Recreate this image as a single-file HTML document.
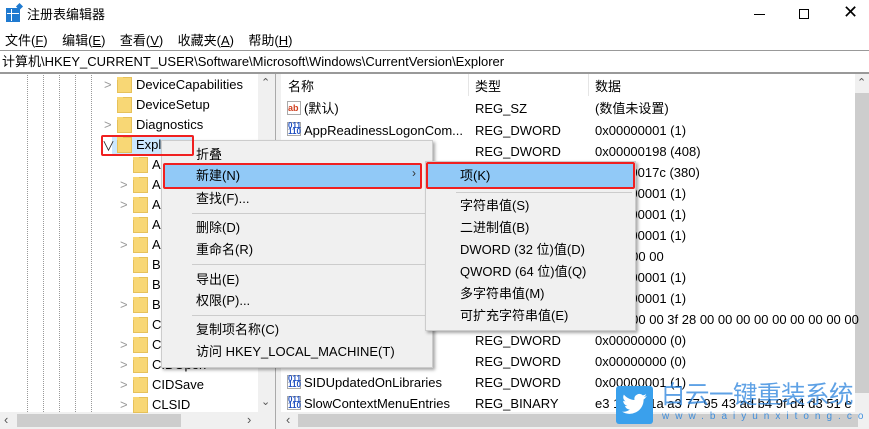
<!DOCTYPE html><html><head><meta charset="utf-8"><style>
*{margin:0;padding:0;box-sizing:border-box}
body{width:869px;height:429px;overflow:hidden;background:#fff;font-family:"Liberation Sans","Noto Sans CJK SC",sans-serif;font-size:13px;color:#000;position:relative}
.a{position:absolute;white-space:nowrap}
.t{line-height:22px}
.fold{position:absolute;width:15px;height:16px;background:#f8d775;border:1px solid #e6c15a}
.fold:before{content:"";position:absolute;left:-1px;top:-1px;width:6px;height:3px;background:#f8d775}
.chev{position:absolute;color:#999;font-size:13px}
.dv{position:absolute;top:73px;height:339px;border-left:1px dotted #999}
.sep{position:absolute;height:1px;background:#ccc}
</style></head><body>
<div class="a" style="left:6px;top:8px;width:14px;height:14px;background:#1f7ad0;border:1px solid #1f7ad0;background-image:linear-gradient(#fff 0 0),linear-gradient(#fff 0 0);background-size:14px 1px,1px 14px;background-position:0 4px,4px 0;background-repeat:no-repeat"></div>
<div class="a" style="left:17px;top:4px;width:5px;height:5px;background:#1f7ad0;transform:rotate(45deg)"></div>
<div class="a t" style="left:27px;top:4px">注册表编辑器</div>
<div class="a" style="left:754px;top:14px;width:11px;height:1px;background:#000"></div>
<div class="a" style="left:799px;top:9px;width:10px;height:10px;border:1px solid #000"></div>
<div class="a" style="left:843px;top:2px;font-size:18px;font-weight:300">✕</div>
<div class="a t" style="left:5px;top:30px">文件(<u>F</u>)&nbsp;&nbsp;&nbsp; 编辑(<u>E</u>)&nbsp;&nbsp;&nbsp; 查看(<u>V</u>)&nbsp;&nbsp;&nbsp; 收藏夹(<u>A</u>)&nbsp;&nbsp;&nbsp; 帮助(<u>H</u>)</div>
<div class="a" style="left:0;top:50px;width:869px;height:1px;background:#999"></div>
<div class="a t" style="left:2px;top:51px">计算机\HKEY_CURRENT_USER\Software\Microsoft\Windows\CurrentVersion\Explorer</div>
<div class="a" style="left:0;top:72px;width:869px;height:2px;background:#999"></div>
<div class="dv" style="left:27px"></div><div class="dv" style="left:43px"></div><div class="dv" style="left:59px"></div><div class="dv" style="left:75px"></div><div class="dv" style="left:91px"></div>
<div class="a" style="left:258px;top:74px;width:17px;height:338px;background:#f0f0f0"></div>
<div class="a" style="left:261px;top:76px;font-size:11px;color:#555">⌃</div>
<div class="a" style="left:261px;top:395px;font-size:11px;color:#555">⌄</div>
<div class="a" style="left:0;top:412px;width:275px;height:17px;background:#f0f0f0"></div>
<div class="a" style="left:17px;top:414px;width:164px;height:13px;background:#cdcdcd"></div>
<div class="a" style="left:4px;top:412px;color:#555">‹</div><div class="a" style="left:247px;top:412px;color:#555">›</div>
<div class="a" style="left:275px;top:74px;width:6px;height:355px;background:#f0f0f0;border-left:1px solid #aaa"></div>
<div class="a" style="left:112px;top:135px;width:82px;height:20px;background:#cce8ff"></div>
<div class="chev" style="left:104px;top:77px">&gt;</div><div class="fold" style="left:117px;top:77px"></div><div class="a t" style="left:136px;top:74px">DeviceCapabilities</div>
<div class="fold" style="left:117px;top:97px"></div><div class="a t" style="left:136px;top:94px">DeviceSetup</div>
<div class="chev" style="left:104px;top:117px">&gt;</div><div class="fold" style="left:117px;top:117px"></div><div class="a t" style="left:136px;top:114px">Diagnostics</div>
<div class="chev" style="left:102px;top:136px;color:#333">∨</div><div class="fold" style="left:117px;top:137px"></div><div class="a t" style="left:136px;top:134px">Explorer</div>
<div class="fold" style="left:133px;top:157px"></div><div class="a t" style="left:152px;top:154px">A</div>
<div class="chev" style="left:120px;top:177px">&gt;</div><div class="fold" style="left:133px;top:177px"></div><div class="a t" style="left:152px;top:174px">A</div>
<div class="chev" style="left:120px;top:197px">&gt;</div><div class="fold" style="left:133px;top:197px"></div><div class="a t" style="left:152px;top:194px">A</div>
<div class="fold" style="left:133px;top:217px"></div><div class="a t" style="left:152px;top:214px">A</div>
<div class="chev" style="left:120px;top:237px">&gt;</div><div class="fold" style="left:133px;top:237px"></div><div class="a t" style="left:152px;top:234px">A</div>
<div class="fold" style="left:133px;top:257px"></div><div class="a t" style="left:152px;top:254px">B</div>
<div class="fold" style="left:133px;top:277px"></div><div class="a t" style="left:152px;top:274px">B</div>
<div class="chev" style="left:120px;top:297px">&gt;</div><div class="fold" style="left:133px;top:297px"></div><div class="a t" style="left:152px;top:294px">B</div>
<div class="fold" style="left:133px;top:317px"></div><div class="a t" style="left:152px;top:314px">C</div>
<div class="chev" style="left:120px;top:337px">&gt;</div><div class="fold" style="left:133px;top:337px"></div><div class="a t" style="left:152px;top:334px">C</div>
<div class="chev" style="left:120px;top:357px">&gt;</div><div class="fold" style="left:133px;top:357px"></div><div class="a t" style="left:152px;top:354px">CIDOpen</div>
<div class="chev" style="left:120px;top:377px">&gt;</div><div class="fold" style="left:133px;top:377px"></div><div class="a t" style="left:152px;top:374px">CIDSave</div>
<div class="chev" style="left:120px;top:397px">&gt;</div><div class="fold" style="left:133px;top:397px"></div><div class="a t" style="left:152px;top:394px">CLSID</div>
<div class="a" style="left:468px;top:74px;width:1px;height:22px;background:#e5e5e5"></div>
<div class="a" style="left:588px;top:74px;width:1px;height:22px;background:#e5e5e5"></div>
<div class="a t" style="left:288px;top:76px">名称</div><div class="a t" style="left:475px;top:76px">类型</div><div class="a t" style="left:595px;top:76px">数据</div>
<div class="a" style="left:855px;top:74px;width:14px;height:338px;background:#f0f0f0"></div>
<div class="a" style="left:855px;top:93px;width:14px;height:300px;background:#cdcdcd"></div>
<div class="a" style="left:857px;top:76px;font-size:11px;color:#555">⌃</div>
<div class="a" style="left:281px;top:412px;width:588px;height:17px;background:#f0f0f0"></div>
<div class="a" style="left:298px;top:414px;width:560px;height:13px;background:#cdcdcd"></div>
<div class="a" style="left:286px;top:412px;color:#555">‹</div>
<div class="a" style="left:287px;top:101px;width:14px;height:14px;border:1px solid #aaa;color:#d04020;font-size:9px;font-weight:bold;line-height:12px">ab</div>
<div class="a t" style="left:304px;top:98px">(默认)</div><div class="a t" style="left:475px;top:98px">REG_SZ</div><div class="a t" style="left:595px;top:98px">(数值未设置)</div>
<div class="a" style="left:287px;top:122px;width:14px;height:14px;border:1px solid #aaa;color:#2050c0;font-size:8px;font-weight:bold;line-height:6px">011<br>110</div>
<div class="a t" style="left:304px;top:120px">AppReadinessLogonCom...</div><div class="a t" style="left:475px;top:120px">REG_DWORD</div><div class="a t" style="left:595px;top:120px">0x00000001 (1)</div>
<div class="a t" style="left:304px;top:141px">ShellState Height</div><div class="a t" style="left:475px;top:141px">REG_DWORD</div><div class="a t" style="left:595px;top:141px">0x00000198 (408)</div>
<div class="a t" style="left:595px;top:162px">0x0000017c (380)</div>
<div class="a t" style="left:595px;top:183px">0x00000001 (1)</div>
<div class="a t" style="left:595px;top:204px">0x00000001 (1)</div>
<div class="a t" style="left:595px;top:225px">0x00000001 (1)</div>
<div class="a t" style="left:595px;top:246px">00 00 00 00</div>
<div class="a t" style="left:595px;top:267px">0x00000001 (1)</div>
<div class="a t" style="left:595px;top:288px">0x00000001 (1)</div>
<div class="a t" style="left:595px;top:309px">00 00 00 00 3f 28 00 00 00 00 00 00 00 00 00</div>
<div class="a t" style="left:475px;top:330px">REG_DWORD</div><div class="a t" style="left:595px;top:330px">0x00000000 (0)</div>
<div class="a t" style="left:475px;top:351px">REG_DWORD</div><div class="a t" style="left:595px;top:351px">0x00000000 (0)</div>
<div class="a" style="left:287px;top:375px;width:14px;height:14px;border:1px solid #aaa;color:#2050c0;font-size:8px;font-weight:bold;line-height:6px">011<br>110</div>
<div class="a t" style="left:304px;top:372px">SIDUpdatedOnLibraries</div><div class="a t" style="left:475px;top:372px">REG_DWORD</div><div class="a t" style="left:595px;top:372px">0x00000001 (1)</div>
<div class="a" style="left:287px;top:396px;width:14px;height:14px;border:1px solid #aaa;color:#2050c0;font-size:8px;font-weight:bold;line-height:6px">011<br>110</div>
<div class="a t" style="left:304px;top:393px">SlowContextMenuEntries</div><div class="a t" style="left:475px;top:393px">REG_BINARY</div><div class="a t" style="left:595px;top:393px">e3 1e 8e 1a a3 77 95 43 ad b4 9f d4 d3 51 e</div>
<div class="a" style="left:855px;top:393px;width:14px;height:19px;background:#f0f0f0"></div>
<div class="a" style="left:161px;top:140px;width:272px;height:228px;background:#f0f0f0;border:1px solid #ccc;box-shadow:2px 2px 3px rgba(0,0,0,.35)"></div>
<div class="a" style="left:163px;top:164px;width:258px;height:23px;background:#91c9f7"></div>
<div class="a t" style="left:196px;top:144px">折叠</div>
<div class="a t" style="left:196px;top:165px">新建(N)</div><div class="a" style="left:412px;top:166px;font-size:12px;color:#333">›</div>
<div class="a t" style="left:196px;top:188px">查找(F)...</div>
<div class="sep" style="left:192px;top:213px;width:238px"></div>
<div class="a t" style="left:196px;top:217px">删除(D)</div>
<div class="a t" style="left:196px;top:239px">重命名(R)</div>
<div class="sep" style="left:192px;top:264px;width:238px"></div>
<div class="a t" style="left:196px;top:269px">导出(E)</div>
<div class="a t" style="left:196px;top:290px">权限(P)...</div>
<div class="sep" style="left:192px;top:315px;width:238px"></div>
<div class="a t" style="left:196px;top:319px">复制项名称(C)</div>
<div class="a t" style="left:196px;top:341px">访问 HKEY_LOCAL_MACHINE(T)</div>
<div class="a" style="left:425px;top:161px;width:211px;height:170px;background:#f0f0f0;border:1px solid #ccc;box-shadow:2px 2px 3px rgba(0,0,0,.35)"></div>
<div class="a" style="left:427px;top:164px;width:206px;height:23px;background:#91c9f7"></div>
<div class="sep" style="left:456px;top:192px;width:176px"></div>
<div class="a t" style="left:460px;top:165px">项(K)</div>
<div class="a t" style="left:460px;top:195px">字符串值(S)</div>
<div class="a t" style="left:460px;top:217px">二进制值(B)</div>
<div class="a t" style="left:460px;top:239px">DWORD (32 位)值(D)</div>
<div class="a t" style="left:460px;top:261px">QWORD (64 位)值(Q)</div>
<div class="a t" style="left:460px;top:283px">多字符串值(M)</div>
<div class="a t" style="left:460px;top:305px">可扩充字符串值(E)</div>
<div class="a" style="left:101px;top:135px;width:93px;height:21px;border:2px solid #f02020;border-radius:2px"></div>
<div class="a" style="left:163px;top:163px;width:259px;height:26px;border:2px solid #f02020;border-radius:2px"></div>
<div class="a" style="left:426px;top:162px;width:209px;height:27px;border:2px solid #f02020;border-radius:2px"></div>
<div class="a" style="left:616px;top:386px;width:37px;height:38px;background:#3aa0ec;border-radius:3px"></div>
<svg class="a" style="left:620px;top:392px" width="30" height="26" viewBox="0 0 30 26"><path d="M27 4c-1 .5-2 .7-3 .8 1-.6 1.8-1.6 2.2-2.7-1 .6-2 1-3.300 1.3A5 5 0 0 0 14.5 8c-4.3-.2-8-2.3-10.6-5.4-1.4 2.4-.6 5.3 1.6 6.8-.8 0-1.600-.3-2.300-.6 0 2.5 1.8 4.6 4.1 5.1-.8.2-1.5.2-2.300.1.6 2 2.5 3.5 4.8 3.5A10 10 0 0 1 2 19.6 14 14 0 0 0 23.6 7.5c1-.7 1.8-1.6 2.5-2.5z" fill="#fff"/></svg>
<div class="a" style="left:661px;top:381px;font-size:24.5px;line-height:30px;color:rgba(40,130,220,.75);letter-spacing:-0.5px">白云一键重装系统</div>
<div class="a" style="left:662px;top:411px;font-size:10px;line-height:12px;color:rgba(40,130,220,.85);letter-spacing:6px">www.baiyunxitong.com</div>
</body></html>
